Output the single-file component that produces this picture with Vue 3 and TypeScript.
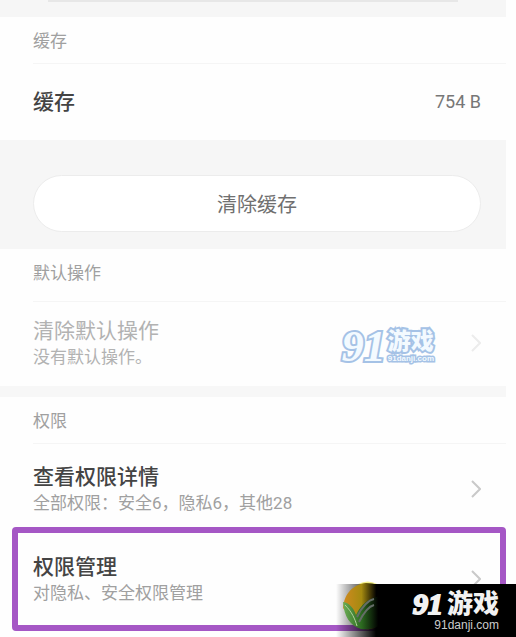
<script setup lang="ts">
interface Row {
  title: string
  detail?: string
  value?: string
  highlighted?: boolean
}

const cache: Row = { title: '缓存', value: '754 B' }
const defaults: Row = { title: '清除默认操作', detail: '没有默认操作。' }
const permissions: Row[] = [
  { title: '查看权限详情', detail: '全部权限：安全6，隐私6，其他28' },
  { title: '权限管理', detail: '对隐私、安全权限管理', highlighted: true },
]
</script>

<template>
  <div class="page">
    <main class="screen">
      <div class="top-band"><span class="card-edge"></span></div>

      <section class="group">
        <h2 class="heading">{{ cache.title }}</h2>
        <div class="row cache-row">
          <span class="title">{{ cache.title }}</span>
          <span class="value">{{ cache.value }}</span>
        </div>
      </section>

      <div class="action-band">
        <button type="button" class="clear">清除缓存</button>
      </div>

      <section class="group defaults-group">
        <h2 class="heading">默认操作</h2>
        <button type="button" class="row" disabled>
          <span class="texts">
            <span class="title">{{ defaults.title }}</span>
            <span class="detail">{{ defaults.detail }}</span>
          </span>
          <svg class="chevron" viewBox="0 0 10 20" aria-hidden="true"><path d="M1 2 9 10 1 18" /></svg>
        </button>
        <div class="watermark">
          <span class="mark-number">91</span>
          <span class="mark-words">
            <span class="mark-name">游戏</span>
            <span class="mark-site">91danji.com</span>
          </span>
        </div>
      </section>

      <div class="divider"></div>

      <section class="group permissions-group">
        <h2 class="heading">权限</h2>
        <button
          v-for="row in permissions"
          :key="row.title"
          type="button"
          class="row"
          :class="{ highlighted: row.highlighted }"
        >
          <span class="texts">
            <span class="title">{{ row.title }}</span>
            <span class="detail">{{ row.detail }}</span>
          </span>
          <svg class="chevron" viewBox="0 0 10 20" aria-hidden="true"><path d="M1 2 9 10 1 18" /></svg>
        </button>
      </section>
    </main>

    <aside class="badge">
      <svg class="leaf" viewBox="0 0 44 56" aria-hidden="true">
        <defs>
          <linearGradient id="sun" x1="0" y1="0" x2="1" y2="0">
            <stop offset="0" stop-color="#d08a20" />
            <stop offset="0.5" stop-color="#a58a10" />
            <stop offset="0.9" stop-color="#000" />
          </linearGradient>
          <linearGradient id="green" x1="0" y1="0" x2="1" y2="0">
            <stop offset="0" stop-color="#6cae55" />
            <stop offset="0.5" stop-color="#2c6a20" />
            <stop offset="0.95" stop-color="#000" />
          </linearGradient>
        </defs>
        <path d="M19 3Q29-2 38 3Z" fill="#f3f08a" />
        <path d="M4 27C5 12 15 3 27 2 36 2 41 5 41 8V44C35 49 25 50 18 44Z" fill="url(#sun)" />
        <path d="M4 21C11 22 15 28 17 34 22 23 30 17 41 15V44C36 48 28 49 22 48 11 45 5 35 4 21Z" fill="url(#green)" />
        <path d="M18 36C23 25 30 19 35 18M20 41C25 31 31 25 35 24" fill="none" stroke="#656d68" stroke-width="2" />
        <path d="M6 24C13 31 16 38 18 45" fill="none" stroke="#b3d29e" stroke-width="1" />
      </svg>
      <div class="brand">
        <div class="brand-name"><span class="brand-number">91</span><span>游戏</span></div>
        <div class="brand-site">91danji.com</div>
      </div>
    </aside>
  </div>
</template>

<style>
body {
  background: #fefefe;
}
</style>

<style scoped>
.page {
  position: relative;
  padding-right: 10px;
  overflow: hidden;
  font-family: Roboto, "Noto Sans CJK SC", sans-serif;
  color: #444;
}

.screen {
  padding-bottom: 6px;
}

.top-band {
  height: 17px;
  padding: 0 48px;
  background: #f6f6f6;
}

.card-edge {
  display: block;
  height: 2px;
  background: #e7e7e7;
}

.group {
  position: relative;
}

.heading {
  margin: 0 0 0 33px;
  padding: 12px 0 10px;
  border-bottom: 1px solid #f5f5f5;
  font-size: 17px;
  line-height: 24px;
  font-weight: 400;
  color: #a0a0a0;
}

.row {
  display: flex;
  box-sizing: border-box;
  width: 100%;
  min-height: 84px;
  align-items: center;
  justify-content: space-between;
  padding: 0 25px 0 33px;
  border: 0;
  background: transparent;
  font-family: inherit;
  text-align: left;
  color: inherit;
}

.cache-row {
  min-height: 76px;
}

.texts {
  display: flex;
  flex-direction: column;
}

.title {
  font-size: 21px;
  line-height: 28px;
  font-weight: 500;
}

.detail {
  font-size: 17px;
  line-height: 24px;
  color: #a0a0a0;
}

.value {
  font-size: 18px;
  line-height: 28px;
  color: #777;
}

.row:disabled {
  padding-bottom: 2px;
}

.row:disabled .title,
.row:disabled .detail {
  font-weight: 400;
  color: #b2b2b2;
}

.row:disabled .chevron {
  stroke: #ececec;
}

.chevron {
  width: 10px;
  height: 20px;
  fill: none;
  stroke: #c9c9c9;
  stroke-width: 2;
}

.action-band {
  padding: 35px 25px 17px 33px;
  background: #f6f6f6;
}

.clear {
  display: block;
  width: 100%;
  height: 57px;
  border: 1px solid #ececec;
  border-radius: 29px;
  background: #fff;
  font-family: inherit;
  font-size: 20px;
  color: #707070;
}

.defaults-group .heading {
  padding-bottom: 16px;
}

.divider {
  height: 11px;
  background: #f7f7f7;
}

.permissions-group .row {
  min-height: 83px;
  padding-top: 6px;
}

.permissions-group .highlighted {
  width: calc(100% - 12px);
  min-height: 104px;
  margin-left: 12px;
  padding: 0 19px 0 15px;
  border: 6px solid #a557c5;
  border-radius: 4px;
}

.watermark {
  position: absolute;
  top: 79px;
  right: 72px;
  display: flex;
  align-items: center;
  gap: 2px;
  color: #f3faff;
  -webkit-text-stroke: 4px #a5c2e6;
  paint-order: stroke fill;
}

.mark-number {
  font-family: "Liberation Serif", serif;
  font-size: 44px;
  line-height: 38px;
  font-weight: 700;
  font-style: italic;
}

.mark-words {
  display: flex;
  flex-direction: column;
}

.mark-name {
  font-size: 23px;
  line-height: 24px;
  font-weight: 900;
}

.mark-site {
  font-family: "Liberation Sans", sans-serif;
  font-size: 8px;
  line-height: 10px;
  font-weight: 700;
  -webkit-text-stroke-width: 3px;
}

.badge {
  position: absolute;
  right: 0;
  bottom: 0;
  display: flex;
  box-sizing: border-box;
  width: 180px;
  height: 53px;
  justify-content: flex-end;
  padding: 6px 17px 0 0;
  background: linear-gradient(90deg, transparent 0, #000 40px);
}

.leaf {
  position: absolute;
  left: 3px;
  bottom: 0;
  width: 44px;
  height: 56px;
}

.brand {
  display: flex;
  flex-direction: column;
  align-items: flex-end;
  color: #f2f2f2;
}

.brand-name {
  display: flex;
  align-items: center;
  gap: 4px;
  font-size: 26px;
  line-height: 28px;
  font-weight: 900;
}

.brand-number {
  font-family: "Liberation Serif", serif;
  font-size: 30px;
  font-weight: 700;
  font-style: italic;
  -webkit-text-stroke: 2px #f2f2f2;
}

.brand-site {
  font-family: "Liberation Sans", sans-serif;
  font-size: 12px;
  line-height: 14px;
  color: #ccc;
}
</style>
